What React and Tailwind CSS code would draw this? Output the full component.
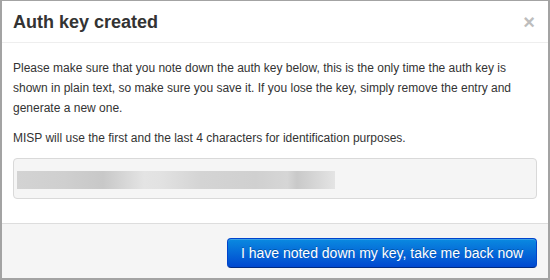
export default function App() {
  return (
    <div
      className="w-[550px] h-[280px] flex flex-col bg-white border-t border-x-2 border-b-2 border-[#a3a3a3] text-[#333]"
      style={{ fontFamily: '"Liberation Sans", Arial, Helvetica, sans-serif' }}
    >
      <div className="h-[42px] shrink-0 flex items-center pl-[11px] pr-[13px] border-b border-[#eee]">
        <h3 className="text-[18px] leading-[24px] font-bold text-[#333]">Auth key created</h3>
        <span className="ml-auto text-[20px] leading-[20px] font-bold text-[#bdbdbd]">×</span>
      </div>
      <div className="flex-1 px-[11px] pt-[15px]">
        <p className="text-[12px] leading-[20px] mb-[10px]">
          Please make sure that you note down the auth key below, this is the only time the auth key is shown in plain text, so make sure you save it. If you lose the key, simply remove the entry and generate a new one.
        </p>
        <p className="text-[12px] leading-[20px] mb-[10px]">
          MISP will use the first and the last 4 characters for identification purposes.
        </p>
        <div className="h-[41px] rounded-[4px] border border-[#d9d9d9] bg-[#f5f5f5] pl-[3px] pt-[12px]">
          <div className="h-[18px] w-[318px] bg-[linear-gradient(to_right,#d3d3d3_0%,#cfcfcf_15%,#c8c8c8_27%,#e4e4e4_40%,#e2e2e2_45%,#d4d4d4_58%,#d0d0d0_75%,#d6d6d6_85%,#c9c9c9_88%,#e4e4e4_100%)]" />
        </div>
      </div>
      <div className="h-[55px] shrink-0 border-t border-[#ddd] bg-[#f5f5f5] flex justify-end items-start pt-[14px] pr-[11px]">
        <button className="h-[30px] w-[310px] rounded-[4px] border border-[#0044cc] border-b-[#002a80] bg-[linear-gradient(to_bottom,#0a8ae0,#0048d0)] text-white text-[14px] leading-[20px] [text-shadow:0_-1px_0_rgba(0,0,0,0.25)] shadow-[inset_0_1px_0_rgba(255,255,255,0.2)]">
          I have noted down my key, take me back now
        </button>
      </div>
    </div>
  );
}
